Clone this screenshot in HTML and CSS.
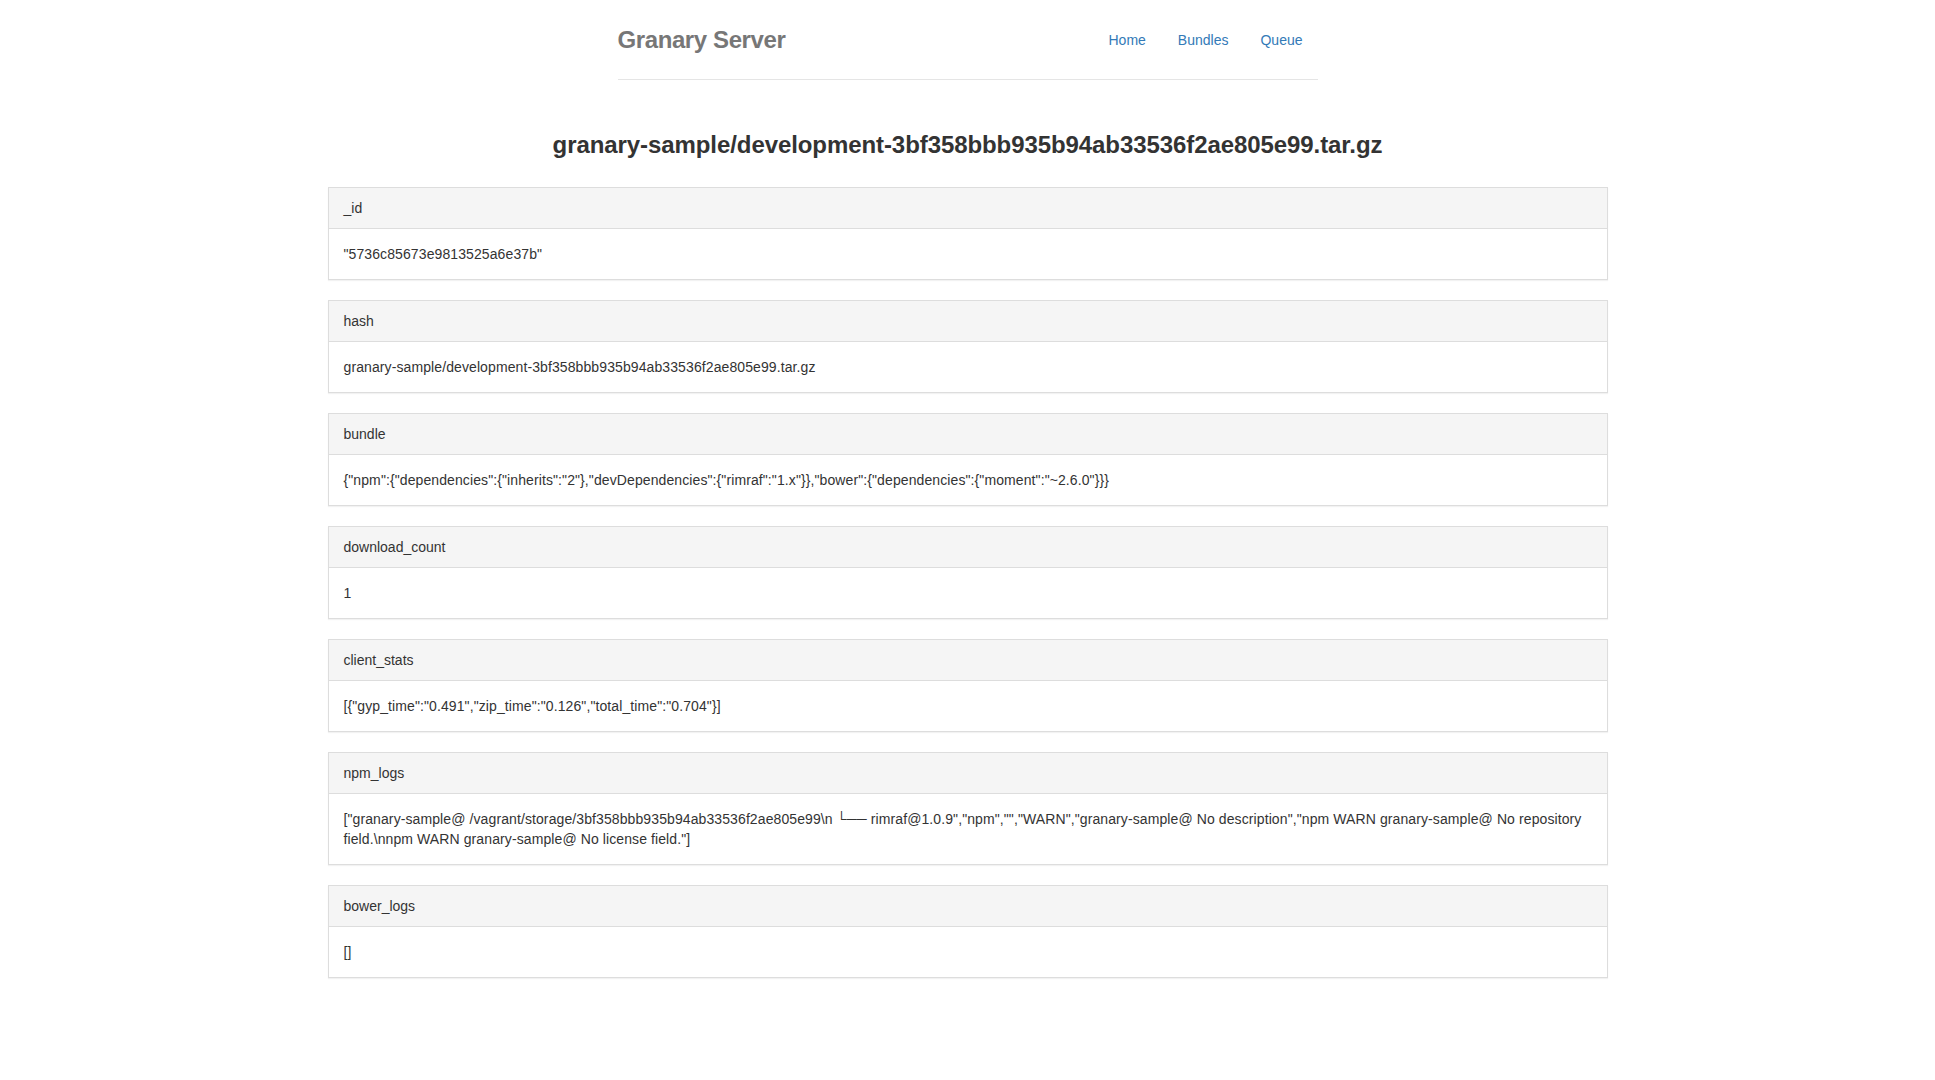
FILE: index.html
```html
<!DOCTYPE html>
<html lang="en">
<head>
<meta charset="utf-8">
<title>Granary Server</title>
<link rel="stylesheet" href="styles.css">
</head>
<body>
<div class="header">
  <h3 class="brand">Granary Server</h3>
  <nav class="nav">
    <a href="#">Home</a>
    <a href="#">Bundles</a>
    <a href="#">Queue</a>
  </nav>
</div>
<main class="main">
  <h3 class="title">granary-sample/development-3bf358bbb935b94ab33536f2ae805e99.tar.gz</h3>
  <section class="panel">
    <div class="panel-heading">_id</div>
    <div class="panel-body">"5736c85673e9813525a6e37b"</div>
  </section>
  <section class="panel">
    <div class="panel-heading">hash</div>
    <div class="panel-body">granary-sample/development-3bf358bbb935b94ab33536f2ae805e99.tar.gz</div>
  </section>
  <section class="panel">
    <div class="panel-heading">bundle</div>
    <div class="panel-body">{"npm":{"dependencies":{"inherits":"2"},"devDependencies":{"rimraf":"1.x"}},"bower":{"dependencies":{"moment":"~2.6.0"}}}</div>
  </section>
  <section class="panel">
    <div class="panel-heading">download_count</div>
    <div class="panel-body">1</div>
  </section>
  <section class="panel">
    <div class="panel-heading">client_stats</div>
    <div class="panel-body">[{"gyp_time":"0.491","zip_time":"0.126","total_time":"0.704"}]</div>
  </section>
  <section class="panel">
    <div class="panel-heading">npm_logs</div>
    <div class="panel-body">["granary-sample@ /vagrant/storage/3bf358bbb935b94ab33536f2ae805e99\n └── rimraf@1.0.9","npm","","WARN","granary-sample@ No description","npm WARN granary-sample@ No repository field.\nnpm WARN granary-sample@ No license field."]</div>
  </section>
  <section class="panel">
    <div class="panel-heading">bower_logs</div>
    <div class="panel-body">[]</div>
  </section>
</main>
</body>
</html>
```

FILE: styles.css
```css
* {
  box-sizing: border-box;
}

html, body {
  margin: 0;
  background: #fff;
}

body {
  padding-top: 20px;
  font-family: "Liberation Sans", Arial, Helvetica, "DejaVu Sans", sans-serif;
  font-size: 14px;
  line-height: 20px;
  color: #333;
}

.header {
  width: 700px;
  margin: 0 auto;
  display: flex;
  justify-content: space-between;
  align-items: center;
  padding-bottom: 19px;
  border-bottom: 1px solid #e5e5e5;
}

.brand {
  margin: 0;
  font-size: 24px;
  line-height: 40px;
  font-weight: bold;
  letter-spacing: -0.4px;
  color: #777;
}

.nav {
  display: flex;
  gap: 2px;
}

.nav a {
  display: block;
  padding: 10px 15px;
  line-height: 20px;
  color: #337ab7;
  text-decoration: none;
}

.main {
  width: 1280px;
  margin: 0 auto;
}

.title {
  margin: 52px 0 29px;
  font-size: 24px;
  line-height: 26px;
  font-weight: bold;
  letter-spacing: -0.08px;
  text-align: center;
  color: #333;
}

.panel {
  margin-bottom: 20px;
  border: 1px solid #ddd;
  background: #fff;
  box-shadow: 0 1px 1px rgba(0, 0, 0, 0.05);
}

.panel-heading {
  padding: 10px 15px;
  background: #f5f5f5;
  border-bottom: 1px solid #ddd;
}

.panel-body {
  padding: 15px;
  letter-spacing: 0.1px;
}
```
